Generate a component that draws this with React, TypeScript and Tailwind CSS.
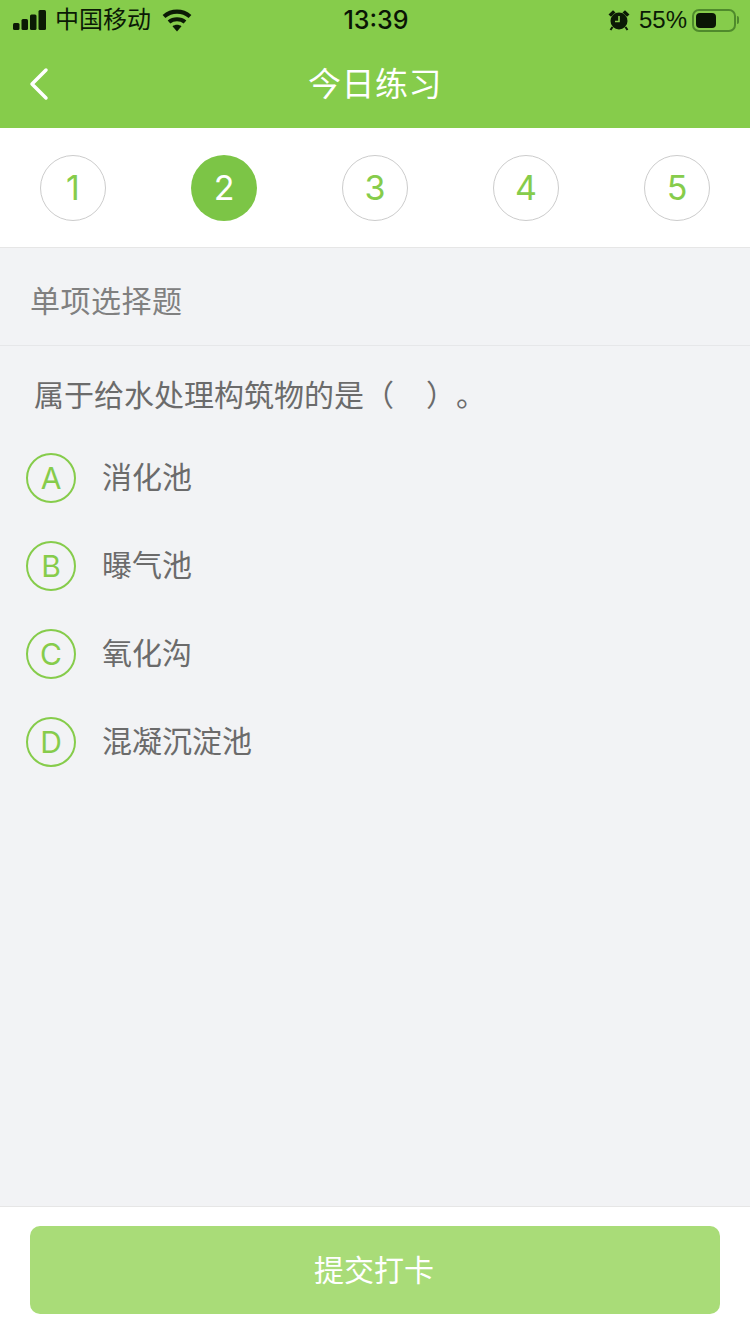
const sans = "font-['Liberation_Sans','Noto_Sans_CJK_SC',sans-serif]";
const light = "font-['Inter','Noto_Sans_CJK_SC',sans-serif] font-normal";

const steps = [1, 2, 3, 4, 5];
const options = [
  { key: 'A', text: '消化池' },
  { key: 'B', text: '曝气池' },
  { key: 'C', text: '氧化沟' },
  { key: 'D', text: '混凝沉淀池' },
];

function StatusBar() {
  return (
    <div className="h-10 flex items-center justify-between pl-[13px] pr-[11px] text-[#0b1a05]">
      <div className="w-[200px] flex items-center">
        <svg width="34" height="22" viewBox="0 0 34 22" fill="currentColor">
          <rect x="0" y="14" width="6.500" height="7" rx="1.500" />
          <rect x="8.500" y="10" width="6.500" height="11" rx="1.500" />
          <rect x="17" y="5.500" width="6.500" height="15.500" rx="1.500" />
          <rect x="25.500" y="1" width="7.500" height="20" rx="1.500" />
        </svg>
        <span className="ml-2 text-2xl leading-none">中国移动</span>
        <svg className="ml-[11px]" width="30" height="23" viewBox="0 0 30 23" fill="none" stroke="currentColor" strokeWidth="4.200">
          <path d="M2 7.500C9.500 1 20.500 1 28 7.500" />
          <path d="M7 13C11.500 9.300 18.500 9.300 23 13" />
          <path d="M10.500 17.200L15 22.500l4.500-5.300c-2.600-2-6.400-2-9 0z" fill="currentColor" stroke="none" />
        </svg>
      </div>
      <span className="font-['Inter',sans-serif] text-[25px] leading-none font-medium text-[#0a1505]">13:39</span>
      <div className="w-[200px] flex items-center justify-end">
        <svg width="22" height="22" viewBox="0 0 22 22" fill="currentColor">
          <circle cx="11" cy="12" r="8.500" />
          <path d="M0.500 5.500L5 1.200 7.500 3.400 3 7.800zM21.500 5.500L17 1.200 14.500 3.400 19 7.800z" />
          <path d="M4.500 18l-2 3M17.500 18l2 3" stroke="currentColor" strokeWidth="2" />
          <path d="M11 7v5.500H7" fill="none" stroke="#86cc4b" strokeWidth="1.600" />
        </svg>
        <span className="ml-[9px] text-2xl leading-none">55%</span>
        <div className="ml-[5px] w-[44px] h-[23px] rounded-[7px] border-2 border-[#4f8a2c] p-[2px]">
          <div className="h-full w-[20px] rounded-[4px] bg-[#0a1505]" />
        </div>
        <div className="ml-[1px] w-[2px] h-2 rounded-r-sm bg-[#4f8a2c]" />
      </div>
    </div>
  );
}

function Header() {
  return (
    <div className="relative h-[88px] flex items-center justify-center">
      <svg className="absolute left-7 top-[27px]" width="22" height="34" viewBox="0 0 22 34" fill="none" stroke="#fff" strokeWidth="3.500" strokeLinecap="round" strokeLinejoin="round">
        <path d="M18 3L4 17l14 14" />
      </svg>
      <span className="text-[33px] tracking-[0.5px] leading-none text-white">今日练习</span>
    </div>
  );
}

export default function App() {
  return (
    <div className={`${sans} w-[750px] h-[1334px] flex flex-col bg-[#f2f3f5]`}>
      <div className="bg-[#86cc4b]">
        <StatusBar />
        <Header />
      </div>

      <div className="h-[120px] bg-white border-b border-[#e6e6e6] flex items-center justify-between px-10">
        {steps.map((n) => (
          <div
            key={n}
            className={
              n === 2
                ? `${light} w-[66px] h-[66px] rounded-full bg-[#7cc546] text-white text-[34px] flex items-center justify-center`
                : `${light} w-[66px] h-[66px] rounded-full border border-[#cccccc] text-[#86cc4b] text-[34px] flex items-center justify-center`
            }
          >
            {n}
          </div>
        ))}
      </div>

      <div className="h-[98px] border-b border-[#e6e7e9] flex items-center pl-[30px] pt-[10px] text-[30px] tracking-[0.5px] leading-none text-[#808080]">
        单项选择题
      </div>

      <div className="flex-1 flex flex-col">
        <div className="pl-[34px] pt-[32px] text-[30px] leading-[36px] text-[#6b6b6b] flex">
          <span>属于给水处理构筑物的是（</span>
          <span className="ml-[32px]">）</span>
          <span>。</span>
        </div>
        <div className="mt-[20px] flex flex-col">
          {options.map((o) => (
            <div key={o.key} className="h-[88px] flex items-center pl-[26px]">
              <div className={`${light} w-[50px] h-[50px] rounded-full border-2 border-[#86cc4b] text-[#86cc4b] text-[30px] flex items-center justify-center`}>
                {o.key}
              </div>
              <span className="ml-[26px] text-[30px] leading-none text-[#6b6b6b]">{o.text}</span>
            </div>
          ))}
        </div>
      </div>

      <div className="h-[128px] bg-white border-t border-[#e6e6e6] px-[30px] pt-[19px]">
        <div className="h-[88px] rounded-[10px] bg-[#a9dc78] text-white text-[30px] pr-[2px] flex items-center justify-center">
          提交打卡
        </div>
      </div>
    </div>
  );
}
